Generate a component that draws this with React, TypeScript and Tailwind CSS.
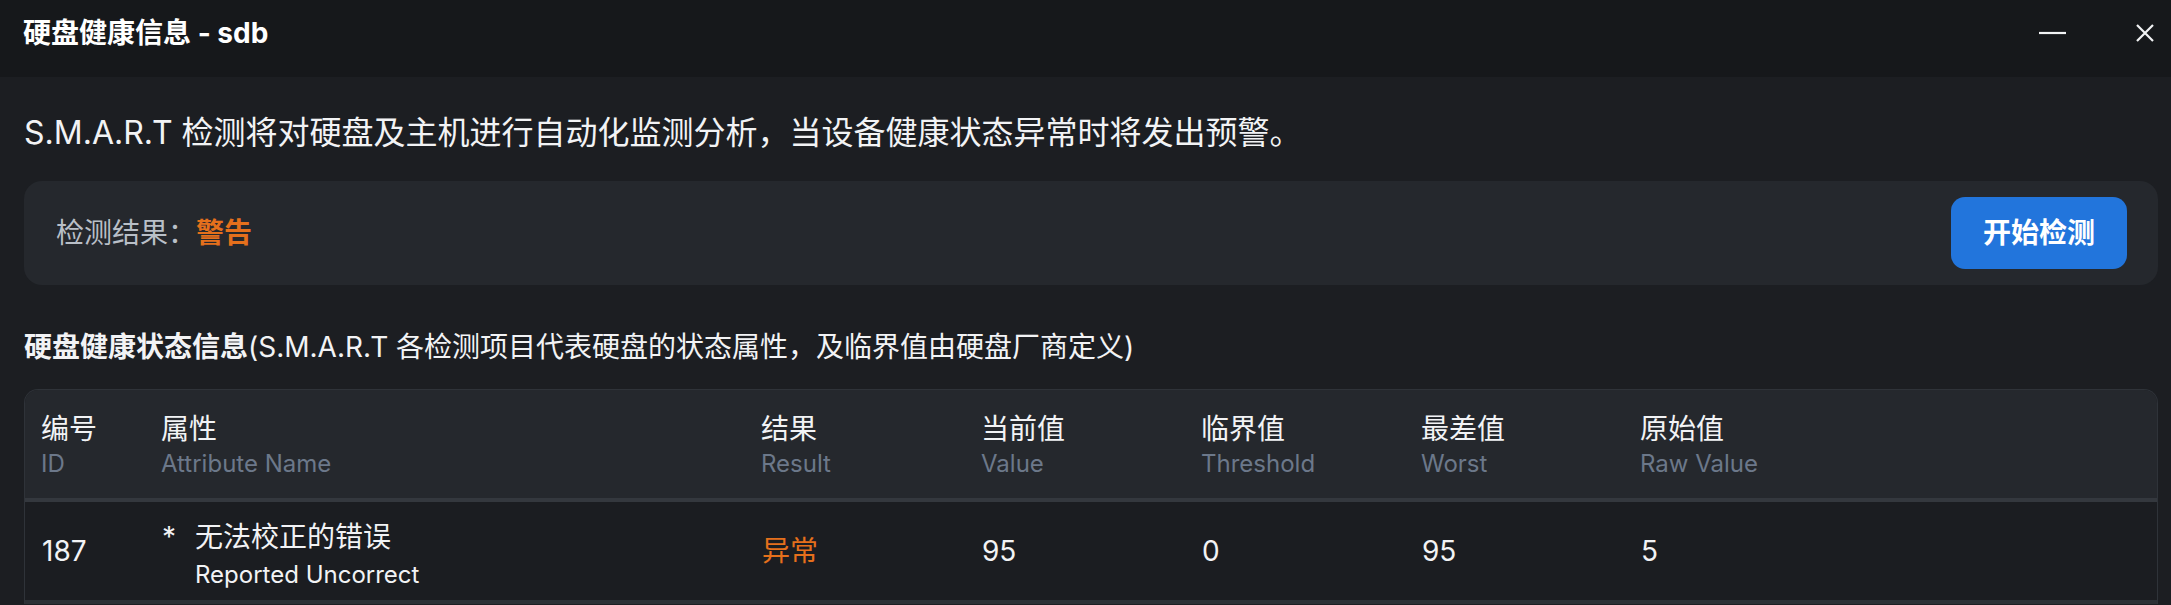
import { Fragment } from "react";

const columns = [
  { zh: "编号", en: "ID" },
  { zh: "属性", en: "Attribute Name" },
  { zh: "结果", en: "Result" },
  { zh: "当前值", en: "Value" },
  { zh: "临界值", en: "Threshold" },
  { zh: "最差值", en: "Worst" },
  { zh: "原始值", en: "Raw Value" },
  { zh: "", en: "" },
];

const rows = [
  {
    id: "187",
    name: "无法校正的错误",
    nameEn: "Reported Uncorrect",
    critical: true,
    result: "异常",
    value: "95",
    threshold: "0",
    worst: "95",
    raw: "5",
  },
];

export default function App() {
  return (
    <div className="w-[2171px] h-[605px] overflow-hidden bg-[#1c1e22] text-[#f2f3f5] font-['Inter','Noto_Sans_CJK_SC',sans-serif]">
      <TitleBar />
      <main className="pl-6 pr-[13px] pt-[34px]">
        <p className="text-[32px] leading-[44px]">
          S.M.A.R.T 检测将对硬盘及主机进行自动化监测分析，当设备健康状态异常时将发出预警。
        </p>

        <div className="mt-[26px] h-[104px] rounded-[18px] bg-[#25282d] flex items-center justify-between pl-8 pr-[31px]">
          <div className="text-[28px] leading-[40px] text-[#b9bfc7]">
            检测结果：<span className="font-bold text-[#e5701c]">警告</span>
          </div>
          <button
            type="button"
            className="w-[176px] h-[72px] rounded-[14px] bg-[#2275dc] text-white text-[28px] font-bold"
          >
            开始检测
          </button>
        </div>

        <h2 className="mt-[42px] text-[28px] leading-[40px]">
          <span className="font-bold">硬盘健康状态信息</span>
          (S.M.A.R.T 各检测项目代表硬盘的状态属性，及临界值由硬盘厂商定义)
        </h2>

        <SmartTable />
      </main>
    </div>
  );
}

function TitleBar() {
  return (
    <div className="h-[77px] bg-[#16181b] flex items-start justify-between pl-[23px] pr-[17px]">
      <div className="h-[66px] flex items-center text-[28px] font-bold text-white">
        硬盘健康信息 - sdb
      </div>
      <div className="h-[66px] flex items-center gap-[70px]">
        <svg width="27" height="20" viewBox="0 0 27 20">
          <line x1="0" y1="10" x2="27" y2="10" stroke="#f2f3f5" strokeWidth="2.2" />
        </svg>
        <svg width="18" height="18" viewBox="0 0 18 18">
          <path d="M1 1L17 17M17 1L1 17" stroke="#f2f3f5" strokeWidth="2.2" />
        </svg>
      </div>
    </div>
  );
}

function SmartTable() {
  const grid =
    "grid grid-cols-[120px_600px_220px_220px_220px_219px_301px_1fr]";

  return (
    <div className="mt-[22px] rounded-t-[14px] border border-b-0 border-[#2f3339] overflow-hidden">
      <div className={`${grid} bg-[#25282d] border-b-4 border-[#34383e]`}>
        {columns.map((col, i) => (
          <div key={i} className="h-[108px] pl-[16px] pt-[22px]">
            <div className="text-[28px] leading-[34px] text-[#f2f3f5]">{col.zh}</div>
            <div className="text-[24px] leading-[36px] text-[#6c788a]">{col.en}</div>
          </div>
        ))}
      </div>

      {rows.map((row) => (
        <Fragment key={row.id}>
          <div className={`${grid} bg-[#1b1d21] border-b-4 border-[#2c3035] text-[28px]`}>
            <div className="h-[98px] pl-[17px] flex items-center">{row.id}</div>
            <div className="h-[98px] pl-[17px] pt-[18px] flex">
              <span className="w-[33px] text-[28px] leading-[34px]">{row.critical ? "*" : ""}</span>
              <div>
                <div className="text-[28px] leading-[34px]">{row.name}</div>
                <div className="text-[24px] leading-[42px]">{row.nameEn}</div>
              </div>
            </div>
            <div className="h-[98px] pl-[17px] flex items-center text-[#e5701c]">{row.result}</div>
            <div className="h-[98px] pl-[17px] flex items-center">{row.value}</div>
            <div className="h-[98px] pl-[17px] flex items-center">{row.threshold}</div>
            <div className="h-[98px] pl-[17px] flex items-center">{row.worst}</div>
            <div className="h-[98px] pl-[17px] flex items-center">{row.raw}</div>
            <div className="h-[98px]" />
          </div>
        </Fragment>
      ))}
    </div>
  );
}
